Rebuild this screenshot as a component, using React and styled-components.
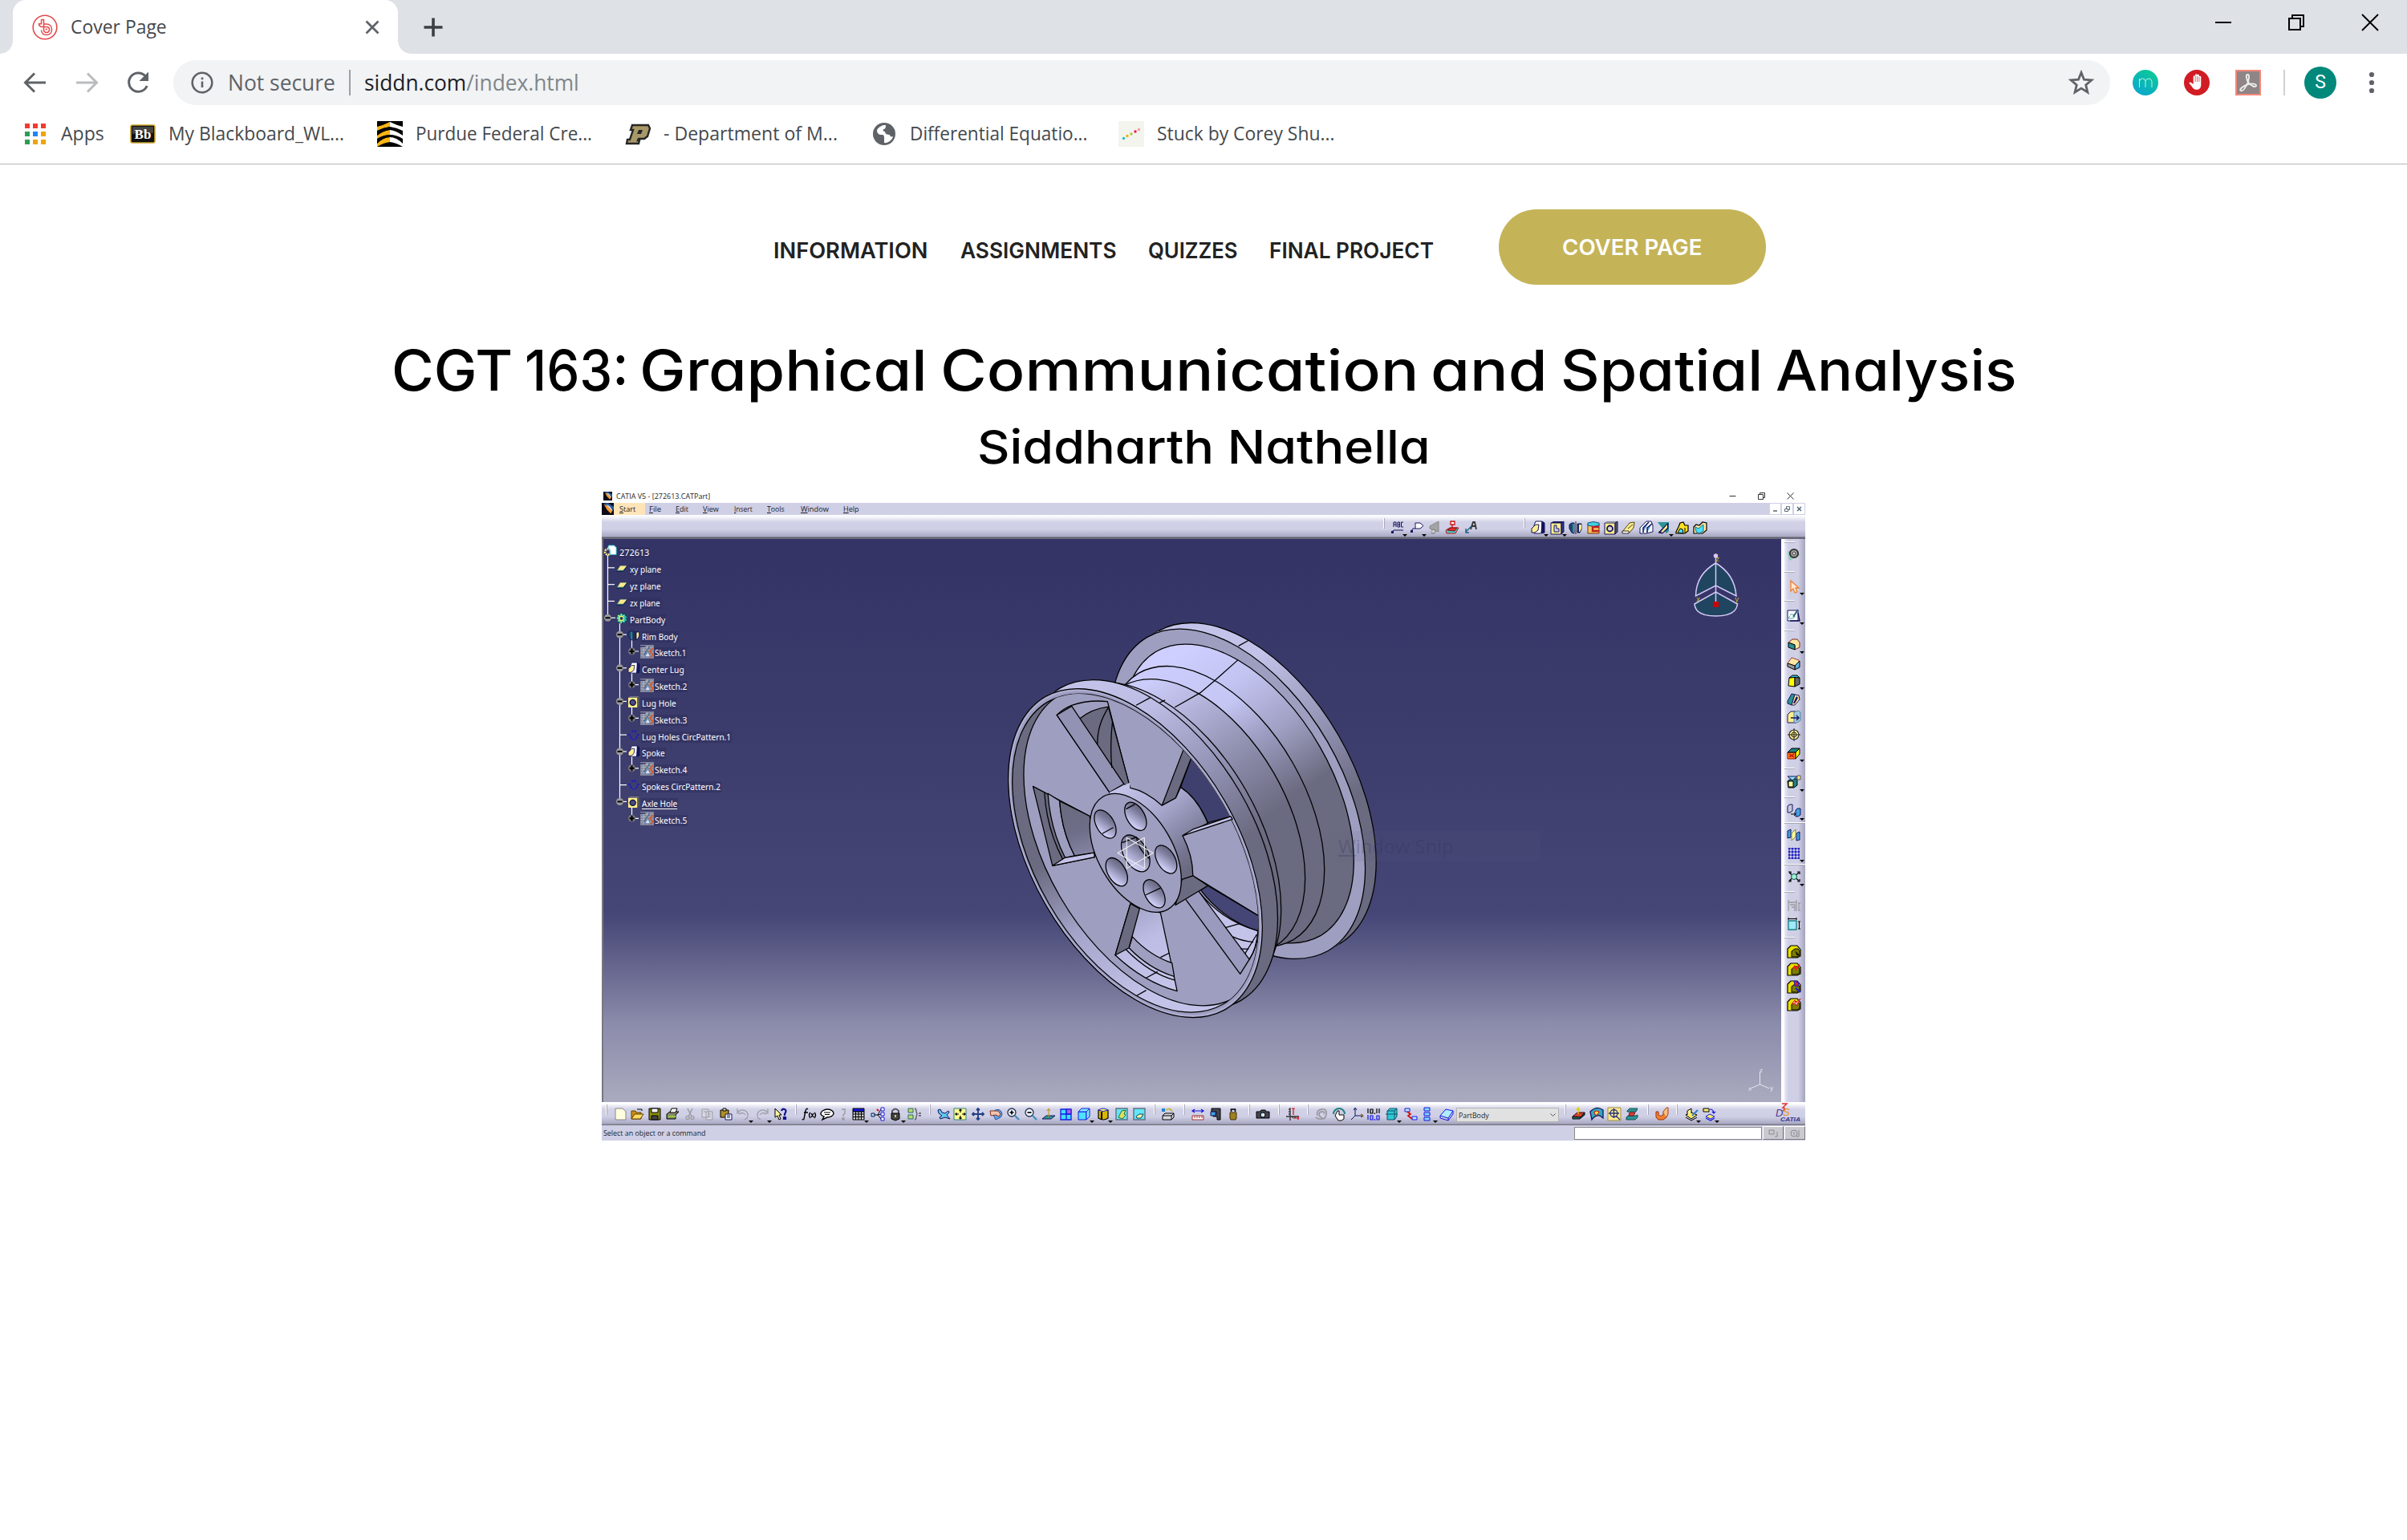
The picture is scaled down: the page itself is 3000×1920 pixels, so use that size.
import React, { useLayoutEffect, useRef, useState } from "react";
import styled, { createGlobalStyle } from "styled-components";

const GlobalStyle = createGlobalStyle`
  html, body { margin: 0; padding: 0; background: #fff; }
  * { box-sizing: border-box; }
  svg { display: block; flex: none; overflow: visible; }
`;

const UI = `"Open Sans", "Noto Sans", sans-serif`;
const HEAD = `Inter, "Open Sans", sans-serif`;

/* ---------- text that fills a known width ---------- */

const FitBox = styled.span`
  display: block;
  flex: none;
  width: ${(p) => p.$w}px;
  margin-left: ${(p) => p.$ml || 0}px;
  white-space: pre;
  text-align: left;
`;
const FitInner = styled.span`
  display: inline-block;
  transform-origin: 0 50%;
  text-decoration: ${(p) => (p.$u ? "underline" : "none")};
  text-underline-offset: 2px;
`;

function Fit({ w, ml, u, children }) {
  const ref = useRef(null);
  const [k, setK] = useState(1);
  useLayoutEffect(() => {
    const measure = () => {
      if (ref.current && ref.current.offsetWidth) {
        setK(w / ref.current.offsetWidth);
      }
    };
    measure();
    if (document.fonts) document.fonts.ready.then(measure);
  }, [w]);
  return (
    <FitBox $w={w} $ml={ml}>
      <FitInner ref={ref} $u={u} style={{ transform: `scaleX(${k})` }}>
        {children}
      </FitInner>
    </FitBox>
  );
}

/* ---------- browser chrome ---------- */

const Page = styled.div`
  width: 3000px;
  height: 1920px;
  display: flex;
  flex-direction: column;
  background: #fff;
  overflow: hidden;
  font-family: ${UI};
`;

const TabStrip = styled.div`
  height: 67px;
  flex: none;
  background: #dee1e6;
  display: flex;
  align-items: stretch;
  padding-left: 16px;
`;
const Tab = styled.div`
  position: relative;
  width: 480px;
  background: #fff;
  border-radius: 16px 16px 0 0;
  display: flex;
  align-items: center;
  padding: 0 24px;
  font-size: 23.5px;
  line-height: 32px;
  color: #45494d;
  &::before, &::after {
    content: "";
    position: absolute;
    bottom: 0;
    width: 16px;
    height: 16px;
  }
  &::before { left: -16px; background: radial-gradient(circle at 0 0, transparent 15.5px, #fff 16px); }
  &::after { right: -16px; background: radial-gradient(circle at 100% 0, transparent 15.5px, #fff 16px); }
`;
const TabTitle = styled.div`
  flex: 1;
  padding-left: 16px;
  margin-top: -2px;
`;
const NewTab = styled.div`
  display: flex;
  align-items: center;
  padding-left: 33px;
  flex: 1;
`;
const WindowButtons = styled.div`
  display: flex;
  gap: 72px;
  padding: 18px 36px 0 0;
`;

const Toolbar = styled.div`
  height: 72px;
  flex: none;
  display: flex;
  align-items: center;
  padding-left: 28px;
`;
const NavButtons = styled.div`
  width: 188px;
  display: flex;
  gap: 32px;
`;
const Omnibox = styled.div`
  width: 2414px;
  height: 56px;
  border-radius: 28px;
  background: #f1f3f4;
  display: flex;
  align-items: center;
  padding-left: 22px;
  padding-right: 20px;
  font-size: 27px;
  line-height: 40px;
  color: #5f6368;
`;
const SecureLabel = styled.div` padding-left: 18px; width: 169px; padding-bottom: 1px; `;
const Rule = styled.div`
  width: 2px;
  height: 32px;
  background: ${(p) => p.$c};
`;
const Url = styled.div`
  flex: 1;
  padding-left: 17px;
  padding-bottom: 1px;
  color: #80868b;
  b { font-weight: 400; color: #202124; }
`;
const Extensions = styled.div`
  display: flex;
  align-items: center;
  gap: 32px;
  padding-left: 28px;
`;
const AccountArea = styled.div`
  display: flex;
  align-items: center;
  margin-left: -4px;
`;
const Avatar = styled.div`
  width: 40px;
  height: 40px;
  margin: 0 28px 0 24px;
  border-radius: 50%;
  background: #00897b;
  color: #fff;
  font: 400 23px/40px Roboto, sans-serif;
  text-align: center;
`;

const Bookmarks = styled.div`
  height: 66px;
  flex: none;
  border-bottom: 1px solid #b3b5b8;
  display: flex;
  align-items: center;
  padding: 0 0 10px 28px;
  font-size: 23.5px;
  line-height: 34px;
  color: #45494d;
`;
const Bookmark = styled.div`
  display: flex;
  align-items: center;
  gap: 16px;
  width: ${(p) => p.$w}px;
`;
const BookmarkText = styled.div` margin-top: -1px; `;
const Glyph = styled.svg`
  width: ${(p) => p.$s || 32}px;
  height: ${(p) => p.$s || 32}px;
`;

const Favicon = () => (
  <Glyph viewBox="0 0 32 32" fill="none" stroke="#e4474a">
    <circle cx="16" cy="16" r="14.8" strokeWidth="1.6" />
    <path d="M11.500 6.500H14.500V18.500C14.500 21.500 16 22.500 18 22.500S21.500 21 21.500 19 20 15.500 18 15.500H13C10 15.500 8.500 14.200 8.500 11.800H11.500V6.500M14.500 12H18C22 12 24.500 15 24.500 19S21.800 25.500 18 25.500 11.800 23.500 11.500 19.500M16.500 18.500H19" strokeWidth="1.500" />
  </Glyph>
);
const BackIcon = ({ flip, color }) => (
  <Glyph viewBox="0 0 32 32" fill="none" stroke={color} strokeWidth="3">
    {flip ? <path d="M3 16H28M17 4.500L28.500 16 17 27.500" /> : <path d="M29 16H4M15 4.500L3.500 16 15 27.500" />}
  </Glyph>
);
const ReloadIcon = () => (
  <Glyph viewBox="0 0 32 32">
    <path d="M27.200 20A11.700 11.700 0 1 1 24.800 7.500" fill="none" stroke="#5f6368" strokeWidth="3" />
    <path d="M29 2.500V14H17.500Z" fill="#5f6368" />
  </Glyph>
);
const InfoIcon = () => (
  <Glyph $s={28} viewBox="0 0 28 28" fill="none" stroke="#5f6368" strokeWidth="2.600">
    <circle cx="14" cy="14" r="12.300" />
    <path d="M14 12.500V20M14 7.500V10.300" />
  </Glyph>
);
const StarIcon = () => (
  <Glyph viewBox="0 0 32 32">
    <path d="M16 3.500L19.500 12.200 28.800 12.900 21.700 18.900 23.900 28 16 23.100 8.100 28 10.300 18.900 3.200 12.900 12.500 12.200Z" fill="none" stroke="#5f6368" strokeWidth="2.800" />
  </Glyph>
);
const MIcon = () => (
  <Glyph viewBox="0 0 32 32">
    <defs>
      <linearGradient id="mg" x1=".8" y1="0" x2=".2" y2="1">
        <stop offset="0" stopColor="#0ccb95" />
        <stop offset="1" stopColor="#0aa6d0" />
      </linearGradient>
    </defs>
    <circle cx="16" cy="16" r="16" fill="url(#mg)" />
    <path d="M8.500 22V11M8.500 14q1-3 4-3t3.500 3V22M16 14q1-3 4.200-3t3.800 3.500V22" fill="none" stroke="#bff0ee" strokeWidth="1" />
  </Glyph>
);
const HandIcon = () => (
  <Glyph viewBox="0 0 32 32">
    <circle cx="16" cy="16" r="16" fill="#d01c22" />
    <path d="M11.700 18V8.500a1.200 1.200 0 0 1 2.400 0V14 6.500a1.200 1.200 0 0 1 2.400 0V14 7a1.200 1.200 0 0 1 2.400 0v7.500V9a1.200 1.200 0 0 1 2.400 0V18.500c0 4-2 6.300-5.500 6.300-3 0-4.500-1.500-6-4L6.600 17c-.4-1.500 1.500-2 2.500-1Z" fill="#fff" />
    <path d="M14.100 8V15M16.500 8V15M18.900 9V15" stroke="#d01c22" strokeWidth=".7" />
  </Glyph>
);
const PdfIcon = () => (
  <Glyph viewBox="0 0 32 32">
    <rect x="1" y="1" width="30" height="30" fill="#8f8585" stroke="#f5877a" strokeWidth="2" />
    <path d="M15.500 15C13 8 13.500 6 15.500 6s2 3 .5 9c-3 7-6.500 12-9 11s1-5 9-8c6-1.500 10.500 0 10 2s-6 1-10.500-5Z" fill="none" stroke="#ececec" strokeWidth="1.900" />
  </Glyph>
);
const Dots = () => (
  <Glyph viewBox="0 0 32 32" fill="#5f6368">
    {[6, 16, 26].map((y) => <circle key={y} cx="16" cy={y} r="3.100" />)}
  </Glyph>
);

const AppsIcon = () => (
  <Glyph viewBox="0 0 32 32">
    {["#f23b30", "#f23b30", "#f23b30", "#2c9f53", "#2184f4", "#f0a30a", "#2c9f53", "#f0a30a", "#f0a30a"].map((c, i) => (
      <rect key={i} x={3 + (i % 3) * 10} y={3 + Math.floor(i / 3) * 10} width="6" height="6" fill={c} />
    ))}
  </Glyph>
);
const BbIcon = () => (
  <Glyph viewBox="0 0 32 32">
    <rect x="1" y="5" width="30" height="22" rx="2" fill="#111" stroke="#c9a227" strokeWidth="1.600" />
    <path d="M3 7H29V15Q16 13 3 16Z" fill="#444" />
    <text x="16" y="22" fontFamily="Liberation Serif, serif" fontWeight="700" fontSize="17" fill="#fff" textAnchor="middle">Bb</text>
  </Glyph>
);
const PurdueFedIcon = () => (
  <Glyph viewBox="0 0 32 32">
    <rect width="32" height="32" fill="#000" />
    <path d="M0 7Q8 5 16 1V7Q8 8 0 12ZM0 18Q8 12 16 11V17Q8 17 0 22ZM0 28Q8 20 16 20V26Q8 27 0 32Z" fill="#fdb515" />
    <path d="M32 7Q24 5 16 1V7Q24 8 32 12ZM32 18Q24 12 16 11V17Q24 17 32 22ZM32 28Q24 20 16 20V26Q24 27 32 32Z" fill="#fff" />
    <path d="M0 12Q8 8 16 7V11Q8 11 0 18Z M0 25Q8 18 16 18V20Q8 20 0 28Z" fill="#000" />
  </Glyph>
);
const PurduePIcon = () => (
  <Glyph viewBox="0 0 32 32">
    <path d="M9 5H29L31 9 28 19 24 22H17L16 24H18L17 28H2L3 23H6L10 11H7Z" fill="#a89968" stroke="#262626" strokeWidth="2.400" />
    <path d="M17 11H22L20 16H15Z" fill="#262626" />
  </Glyph>
);
const GlobeIcon = () => (
  <Glyph viewBox="0 0 32 32">
    <circle cx="16" cy="16" r="14" fill="#5f6368" />
    <path d="M18 5c-3-.5-8 1-11 6 0 4 2 6 6 6 3 0 3 2 3 4v6c4 1 10-3 11-8-2 1-4 0-4-2-3 0-6-1-6-4-2 0-3-1-2-3 2 0 3-1 3-5Z" fill="#fff" />
  </Glyph>
);
const StuckIcon = () => (
  <Glyph viewBox="0 0 32 32">
    <rect width="32" height="32" fill="#f4f4ee" />
    {[["#19c5c5", 6.500, 21.500], ["#f5b000", 11, 18.500], ["#a4c936", 16, 16], ["#f5145f", 21, 13], ["#ff9a94", 25.500, 10.500]].map(([c, x, y]) => (
      <circle key={c} cx={x} cy={y} r="1.700" fill={c} />
    ))}
  </Glyph>
);

const BOOKMARKS = [
  { icon: <AppsIcon />, text: "Apps", tw: 54, w: 134 },
  { icon: <BbIcon />, text: "My Blackboard_WL...", tw: 219, w: 308 },
  { icon: <PurdueFedIcon />, text: "Purdue Federal Cre...", tw: 220, w: 309 },
  { icon: <PurduePIcon />, text: "- Department of M...", tw: 217, w: 307 },
  { icon: <GlobeIcon />, text: "Differential Equatio...", tw: 221, w: 308 },
  { icon: <StuckIcon />, text: "Stuck by Corey Shu...", tw: 221, w: 300 },
];

function Chrome() {
  return (
    <>
      <TabStrip>
        <Tab>
          <Favicon />
          <TabTitle><Fit w={120}>Cover Page</Fit></TabTitle>
          <Glyph $s={16} viewBox="0 0 16 16" stroke="#5f6368" strokeWidth="2.800"><path d="M.5 .5L15.500 15.500M15.500 .5L.5 15.500" /></Glyph>
        </Tab>
        <NewTab>
          <Glyph $s={22} viewBox="0 0 22 22" stroke="#3c4043" strokeWidth="3.600"><path d="M11 -.5V22.500M-.5 11H22.500" /></Glyph>
        </NewTab>
        <WindowButtons>
          <Glyph $s={20} viewBox="0 0 20 20"><path d="M1 10H21" stroke="#000" strokeWidth="2" /></Glyph>
          <Glyph $s={20} viewBox="0 0 20 20" fill="none" stroke="#000" strokeWidth="2"><path d="M1 5H15V19H1ZM5 5V1H19V15H15" /></Glyph>
          <Glyph $s={20} viewBox="0 0 20 20" stroke="#000" strokeWidth="1.800"><path d="M0 0L20 20M20 0L0 20" /></Glyph>
        </WindowButtons>
      </TabStrip>
      <Toolbar>
        <NavButtons>
          <BackIcon color="#5f6368" />
          <BackIcon flip color="#babcbe" />
          <ReloadIcon />
        </NavButtons>
        <Omnibox>
          <InfoIcon />
          <SecureLabel><Fit w={134}>Not secure</Fit></SecureLabel>
          <Rule $c="#9aa0a6" />
          <Url><Fit w={268}><b>siddn.com</b>/index.html</Fit></Url>
          <StarIcon />
        </Omnibox>
        <Extensions>
          <MIcon />
          <HandIcon />
          <PdfIcon />
          <AccountArea>
            <Rule $c="#cfd1d4" />
            <Avatar>S</Avatar>
            <Dots />
          </AccountArea>
        </Extensions>
      </Toolbar>
      <Bookmarks>
        {BOOKMARKS.map((b) => (
          <Bookmark key={b.text} $w={b.w}>
            {b.icon}
            <BookmarkText><Fit w={b.tw}>{b.text}</Fit></BookmarkText>
          </Bookmark>
        ))}
      </Bookmarks>
    </>
  );
}

/* ---------- site header ---------- */

const Site = styled.main`
  display: flex;
  flex-direction: column;
  align-items: center;
  font-family: ${HEAD};
  font-feature-settings: "cv11" 1;
`;
const SiteNav = styled.nav`
  display: flex;
  align-items: center;
  height: 94px;
  margin-top: 56px;
  width: 2352px;
  padding-left: 640px;
  font-size: 27.500px;
  line-height: 40px;
  font-weight: 600;
  color: #222;
`;
const NavLink = styled.a`
  padding-top: 7px;
  width: ${(p) => p.$w}px;
`;
const CoverButton = styled.a`
  width: 333px;
  height: 94px;
  border-radius: 47px;
  background: #c5b358;
  color: #fff;
  display: flex;
  align-items: center;
  justify-content: center;
  padding-bottom: 1px;
`;
const Title = styled.h1`
  margin: 52px 0 0;
  display: flex;
  font-size: 70px;
  line-height: 110px;
  font-weight: 500;
  color: #000;
`;
const Subtitle = styled.h2`
  margin: 0;
  font-size: 58px;
  line-height: 80px;
  font-weight: 500;
  color: #000;
`;

/* ---------- CATIA window ---------- */

const Catia = styled.section`
  width: 1500px;
  height: 812px;
  margin-top: 13px;
  display: flex;
  flex-direction: column;
  background: #cfcfe6;
  font-family: ${UI};
  font-feature-settings: normal;
  color: #1d1d1d;
`;
const CTitle = styled.div`
  height: 17px;
  flex: none;
  background: #fff;
  display: flex;
  align-items: center;
  padding: 0 14px 0 2px;
  font-size: 9.500px;
  line-height: 14px;
`;
const CTitleText = styled.div` flex: 1; padding-left: 5px; `;
const CWinBtns = styled.div` display: flex; gap: 27px; `;
const CMenu = styled.div`
  height: 15px;
  flex: none;
  display: flex;
  align-items: center;
  font-size: 9.500px;
  line-height: 14px;
  u { text-underline-offset: 1px; text-decoration-thickness: 1px; }
`;
const MenuItem = styled.div`
  height: 15px;
  width: ${(p) => p.$w}px;
  padding-left: ${(p) => p.$pl || 0}px;
  padding-top: 1px;
  background: ${(p) => (p.$on ? "#ffe4b8" : "transparent")};
`;
const MdiBtns = styled.div`
  flex: 1;
  display: flex;
  justify-content: flex-end;
  gap: 2px;
  padding-right: 1px;
`;
const MdiBtn = styled.div`
  width: 13px;
  height: 13px;
  background: #fff;
  display: flex;
  align-items: center;
  justify-content: center;
`;
const TopBar = styled.div`
  height: 30px;
  flex: none;
  display: flex;
  padding: 8px 0 0 974px;
  background: linear-gradient(#fff 0, #f4f4fb 3px, #d0d0e6 9px, #cfcfe6 18px, #a9a9c3 27px, #5d5d6d 28px, #70707c 30px);
`;
const Slot = styled.div`
  width: ${(p) => p.$w}px;
  height: 20px;
  flex: none;
  position: relative;
`;
const SepV = styled.div`
  width: 2px;
  height: 13px;
  margin-top: -4px;
  background: linear-gradient(90deg, #fff 50%, #a8a8b8 50%);
`;
const Caret = styled.i`
  position: absolute;
  left: ${(p) => p.$x}px;
  top: ${(p) => p.$y}px;
  border: 3px solid transparent;
  border-top-color: #000;
  border-bottom: 0;
`;
const Middle = styled.div`
  height: 702px;
  flex: none;
  display: flex;
`;
const Viewport = styled.div`
  position: relative;
  width: 1470px;
  border-left: 2px solid #77777f;
  background: linear-gradient(#333366 0%, #3c3c6c 33%, #454576 66%, #5b5b86 73%, #8b8bab 86%, #aaaabf 100%);
  overflow: hidden;
`;
const SideBar = styled.div`
  width: 30px;
  display: flex;
  flex-direction: column;
  background: linear-gradient(90deg, #fff 0 3px, #e4e4f2 5px, #cfcfe6 9px, #cfcfe6 21px, #a4a4bd 30px);
`;
const SideSlot = styled.div`
  height: ${(p) => p.$h}px;
  flex: none;
  position: relative;
  padding-left: 8px;
`;
const SepH = styled.div`
  width: ${(p) => (p.$wide ? 26 : 13)}px;
  margin-left: -4px;
  height: 2px;
  background: linear-gradient(#fff 50%, #a8a8b8 50%);
`;
const BottomBar = styled.div`
  height: 29px;
  flex: none;
  display: flex;
  padding: 7px 0 0 5px;
  background: linear-gradient(#fff 0, #fff 2px, #e2e2f0 6px, #d0d0e6 10px, #cfcfe6 18px, #a9a9c3 27px, #70707c 28px, #8a8a96 29px);
`;
const Combo = styled.div`
  width: 128px;
  height: 18px;
  border: 1px solid #b4b4b4;
  background: #e1e1e1;
  display: flex;
  align-items: center;
  justify-content: space-between;
  padding: 0 3px 0 2px;
  font-size: 9.500px;
  line-height: 15px;
`;
const StatusBar = styled.div`
  flex: 1;
  display: flex;
  align-items: center;
  padding-left: 2px;
  font-size: 9.500px;
  line-height: 14px;
`;
const StatusText = styled.div` width: 1210px; `;
const StatusInput = styled.div`
  width: 234px;
  height: 16px;
  background: #fff;
  border: 1px solid #8a8a8a;
`;
const StatusBtn = styled.div`
  width: 26px;
  height: 17px;
  margin-left: 1px;
  background: #c9c9cf;
  border: 1px solid;
  border-color: #fff #77777f #77777f #fff;
  display: flex;
  align-items: center;
  justify-content: center;
`;

const N = "#15155c", Y = "#ffee8c", T = "#2b9393", K = "#000", C = "#4fe0ff", R = "#d01010", B = "#1818e0", G = "#9c9ca4", D = "#55555f";

/* each icon is a list of [path, fill, stroke, stroke width] on a 16 x 16 grid */
const ICONS = {
  abc: [["M3 11H15M3 11L1 13M3 7V1H6V7M3 4H6M8 7V1H10.500V7H8M8 4H10.500M15 1H12.500V7H15", "none", N], ["M0 12H3V15H0Z", N]],
  flag: [["M6 2H12L16 5.500 12 9H6Z", "#fff", N], ["M6 9H3L1 12", "none", N], ["M0 11H3V14H0Z", N]],
  speaker: [["M2 6L13 0V13L8 11 7 15 4 15 5 10 2 9Z", "#a4a4a4", "#888"], ["M4 11Q8 9 9 12T5 15", "#ccc", "#777"]],
  stamp: [["M0 11L5 8H16L12 15H1Z", "#40c8c8", R], ["M2 11L6 8H14L11 12Z", "#e03030", "#801010"], ["M6 0H11V4H6ZM8 4V9", "#fff", R, 1.300]],
  aarrow: [["M8 10L11 1H13L15 10M9 6H14", "none", "#333", 1.800], ["M9 6L2 13M2 9V14H6", "none", "#206080", 1.400]],
  pad: [["M5 0H13V13L11 15H3V5Z", "#fff", N], ["M13 0L16 2V14L12 15Z", N, N], ["M0 9L5 4H9L8 11 4 14H0Z", Y, N]],
  pocket: [["M0 2H13V16H0Z", Y, N], ["M0 2L3 0H16L13 2Z", N], ["M13 2L16 0V13L13 16Z", "#333388", N], ["M4 5H7V9H10V13H4Z", "#cfcfe6", N]],
  shaft: [["M0 4L3 2H6V15L3 14 0 9Z", "#1c4a70", N], ["M4 3H6V14H4Z", T], ["M10 3H15V10L13 14H10Z", "#1c2a60", N], ["M12 4H15V9L13 13H12Z", Y], ["M8 0V16", "none", "#222"]],
  groove: [["M1 3H15V15H1Z", "#f0c860", "#803000"], ["M1 2Q8 -1 15 2V5Q8 8 1 5Z", "#40d0e0", "#205080"], ["M15 7H7V12H15", "none", "#c02020", 2.400]],
  hole: [["M0 2H13V16H0Z", Y, N], ["M0 2L3 0H16L13 2Z", "#88889a"], ["M13 2L16 0V13L13 16Z", "#55556a", N], ["M3 9A3.500 3.500 0 1 0 10 9 3.500 3.500 0 1 0 3 9Z", "#d8d8c8", N, 1.800]],
  treehole: [["M0 2H13V16H0Z", "#fff08c"], ["M0 2L3 0H16L13 2Z", "#77777f"], ["M13 2L16 0V13L13 16Z", "#55555f"], ["M2.500 9A4 4 0 1 0 10.500 9 4 4 0 1 0 2.500 9Z", "#4a4a80", "#101040", 1.600]],
  rib: [["M0 13L9 2 15 1 14 8 9 14H0Z", Y, "#554400"], ["M0 12H8V15H0ZM7 9L13 4", "#fff", "#333"]],
  slot: [["M0 8L8 0H14L16 5V13L8 15H0Z", "#fff", N], ["M4 14V8L11 1M9 14V8L15 3", "#58a0d8", N, 1.500]],
  stiff: [["M0 1H14V12L11 15Z", T], ["M1 14L13 2V9L6 15Z", "#1c1c60", N], ["M4 13L12 4V8L6 14Z", Y]],
  multi: [["M0 13L3 7 5 2 9 1 11 5 15 5V12L11 15H0Z", "#ffe020", K, 1.200], ["M2 14L5 9 8 10 9 15ZM11 8V14", C, K]],
  multi2: [["M0 7L3 4 7 5 11 1 16 2V11L11 15H0Z", "#ffe9a0", K, 1.200], ["M2 7L6 9 12 4V12L7 15 3 13Z", C, "#107080"]],
  newdoc: [["M2 1H11L15 5V15H2Z", "#fffde0", "#888"]],
  open: [["M1 14V4H6L7 6H13V14Z", "#c89018", "#604000"], ["M1 14L5 8H16L12 14Z", "#ffd860", "#604000"], ["M8 2H14V4", "none", K]],
  save: [["M1 1H15V15H1Z", "#8a8a10", K], ["M4 1H12V6H4Z", "#fff", K], ["M4 10H12V15H4Z", "#444", K]],
  print: [["M1 8L5 5H16L12 9V14H1Z", "#888870", K], ["M5 6L7 1H14L12 6Z", "#fff", K], ["M3 11H12", "none", "#90d030", 2]],
  cut: [["M5 1L10 11M11 1L6 11", "none", G, 1.500], ["M3 12.500A2 2 0 1 0 7 12.500 2 2 0 1 0 3 12.500ZM9 12.500A2 2 0 1 0 13 12.500 2 2 0 1 0 9 12.500Z", "none", G, 1.300]],
  copy: [["M1 2H9V12H1ZM6 5H14V15H6ZM8 8H12M8 11H12M3 5H6", "#d8d8e6", G]],
  paste: [["M2 3H12V12H2Z", "#b09020", K], ["M5 1H9V4H5Z", "#ddd", K], ["M8 8H16V15H8ZM10 10H14M10 12H14", "#fff", N]],
  undo: [["M1 6Q6 1 11 4T13 13L10 15M1 1V7H7M3 8Q8 5 11 9", "none", G, 1.200]],
  redo: [["M15 6Q10 1 5 4T3 13L6 15M15 1V7H9M13 8Q8 5 5 9", "none", G, 1.200]],
  help: [["M1 1V12L4 10 6 15 8 14 6 9H9Z", "#fff3a0", K], ["M9 4Q10 1 13 2T13 8V10M12 12H14V14H12Z", "none", "#101090", 2.200]],
  fx: [["M6 2Q4 0 3 4L1 14Q0 16 -1 14M1 6H6M9 6Q6 9 9 13M10 7L13 12M13 7L10 12M14 6Q17 9 14 13", "none", K, 1.400]],
  bubble: [["M8 2C12 2 16 4 16 7S12 12 8 12L2 15 4 11C1 10 0 9 0 7S4 2 8 2Z", "#fff", K, 1.400], ["M4 6H12M5 8.500H11", "none", K]],
  grayq: [["M6 2H10V7L8 9V11M7 13H9V15H7Z", "none", G, 1.500]],
  table: [["M1 1H15V5H1Z", B, K], ["M1 5H15V15H1ZM1 8H15M1 11.500H15M4.500 5V15M8 5V15M11.500 5V15", "#ccc", K]],
  ktree: [["M0 7H4V11H0Z", "#a0e0f0", N], ["M4 9H8L12 2M8 9L12 8M8 9L12 14", "none", K], ["M12 0H16V4H12ZM12 6H16V10H12ZM12 12H16V16H12Z", "#fff", B], ["M7 2L9 4", "none", R, 2]],
  lock: [["M4 7V4Q8 -1 12 4V7", "none", D, 2], ["M3 7H13V14L8 16 3 14Z", "#44443c", K], ["M7 9H9V12H7Z", "#bbb"]],
  rules: [["M1 1H7V6H1ZM1 9H7V14H1Z", "#c0d860", "#207070"], ["M9 1Q11 1 11 5L12 8 11 11Q11 15 9 15M14 7H17M14 10H17", "none", D, 1.300]],
  fly: [["M1 3L4 2 6 6 10 7 14 4 15 6 12 9 16 14 10 12 4 14 3 12 6 10 2 7Z", "#60c8f0", N]],
  fit: [["M0 1H15V15H0Z", "#ffff90", "#308080"], ["M8 2V6M8 10V14M2 8H6M10 8H14M6.500 3.500L8 2 9.500 3.500M6.500 12.500L8 14 9.500 12.500M3.500 6.500L2 8 3.500 9.500M12.500 6.500L14 8 12.500 9.500", "none", K, 1.200]],
  pan: [["M8 1V15M1 8H15M6 3L8 1 10 3M6 13L8 15 10 13M3 6L1 8 3 10M13 6L15 8 13 10", "none", "#204080", 1.800]],
  rotate: [["M5 9A5.500 5.500 0 1 1 14 12L8 15Z", "#60a8e8", "#2050a0"], ["M1 4H11L14 8 12 11 8 9 2 10Z", "#f4c4b0", "#803020"]],
  zin: [["M1 6A5 5 0 1 0 11 6 5 5 0 1 0 1 6Z", "#f4f8ff", "#203050", 1.300], ["M10 10L15 15", "none", "#4090c0", 2.400], ["M3.500 6H8.500M6 3.500V8.500", "none", K, 1.700]],
  zout: [["M1 6A5 5 0 1 0 11 6 5 5 0 1 0 1 6Z", "#f4f8ff", "#203050", 1.300], ["M10 10L15 15", "none", "#4090c0", 2.400], ["M3.500 6H8.500", "none", K, 1.700]],
  normal: [["M0 14L5 10H16L11 14Z", "#309898", N], ["M8 12V2M6 4L8 1 10 4", "none", "#c09000"]],
  multiv: [["M1 2H14V15H1Z", "#40e0ff", B, 1.300], ["M8 2H14V8H8Z", "#b060e0", B], ["M8 2V15M1 8H14", "none", B, 1.300]],
  cube: [["M1 5H11V15H1Z", C, B], ["M1 5L5 1H15L11 5ZM15 1V11L11 15V5Z", "#80ecff", B]],
  cyl: [["M2 3V13Q8 17 14 13V3Z", "#d8b800", K, 1.200], ["M2 3Q8 -1 14 3 8 6 2 3Z", "#ffff60", B], ["M6 5V15", "none", K, 2]],
  hide: [["M1 1H15V15H1Z", "#60e8f8", "#607080", 1.400], ["M4 12L8 4 13 3 11 8 13 9 9 14Z", "#e0e060", "#207040"]],
  swap: [["M1 1H15V15H1Z", "#60e8f8", "#607080", 1.400], ["M4 11L8 8H13L10 13H5Z", "#fff6a0", "#104060"]],
  sect: [["M1 10L4 7H15V12L12 15H1Z", "#d8d8e0", K], ["M1 10H12V15M12 10L15 7", "none", K], ["M5 3Q10 -1 13 5", "none", "#c0b000", 1.400], ["M0 1H4V5H0Z", "#2080d0"]],
  meas: [["M2 4H14M4 2L1 4 4 6M12 2L15 4 12 6", "none", B, 1.200], ["M1 10H15V15H1ZM4 10V13M7 10V13M10 10V13M13 10V13", "#fff", "#a03030"]],
  caliper: [["M3 1H14V15H10V11H5V8H9V5H3Z", "#444450", K], ["M2 5H8V10H2Z", "#40a0e0", N]],
  weight: [["M5.500 5V2H10.500V5", "none", K, 1.600], ["M4 6H12V13L11 15H5L4 13Z", "#a08020", "#403000"]],
  camera: [["M0 5H4L6 3H11L12 5H16V13H0Z", "#444450", K], ["M5 9A3 3 0 1 0 11 9 3 3 0 1 0 5 9Z", "#d0e8ff", K]],
  ruler: [["M5 0V16M0 11H16M3 2H5M3 5H5M3 8H5M8 13V11M11 13V11", "none", "#333", 1.300], ["M9 9V1M7 1H11M9 13H16M15 11V15", "none", R, 1.200]],
  swirl: [["M3 10Q1 3 8 2T14 8 9 13 5 8 9 5 11 8M1 12Q6 16 13 13", "none", G, 1.800]],
  handg: [["M1 8A7 7 0 1 1 15 8", "none", "#208080", 2], ["M6 4H8V9H14V14L11 16H7L3 10Z", "#fff", K]],
  axis: [["M6 10V1M6 10H15M6 10L1 15M4 3L6 0 8 3M13 8L16 10 13 12", "none", N], ["M13 9H16V12", "none", "#c09000"]],
  tens: [["M1 1V7M4 2H7V7H4ZM9.500 6.500V8M12 1V7M15 1V7", "none", K, 1.200], ["M1 9V15M4 10H7V15H4ZM9.500 14V16M12 10H15V15H12Z", "none", B, 1.200]],
  cycube: [["M2 4L5 1H14V11L11 15H2Z", "#30c8d8", "#105060"], ["M2 4H11V15M11 4L14 1M0 8H15", "none", "#105060"]],
  link: [["M1 1H7V5H1ZM10 11H16V15H10Z", "#c0e8ff", B], ["M4 5L8 8 5 10 10 14", "none", R, 1.800]],
  stack: [["M4 0H11V4H4ZM4 6H11V10H4ZM4 12H11V16H4Z", "#80d8ff", B]],
  body: [["M0 10L7 2 16 4 10 13Z", "#b0ecff", B], ["M0 10V13L10 16V13M10 16L16 8V4", "none", B]],
  an1: [["M0 11L6 6H15L10 13H1Z", "#d04030", "#400"], ["M0 11V14H9L15 9V6L10 12Z", "#207878", K], ["M7 8V1M5 3L7 0 9 3", "none", "#e0d000", 1.400]],
  an2: [["M0 5Q8 -3 16 3V13L12 10Q6 9 2 15Z", "#30a8c0", N, 1.300], ["M5 5Q8 3 11 5L9 9H6Z", "#f0e040", R]],
  an3: [["M0 0H16V16H0Z", "#ffe890", "#a09040"], ["M3 7A4.500 4.500 0 1 0 12 7 4.500 4.500 0 1 0 3 7ZM7.500 1V13M1 7H14M10 10L15 15", "none", "#203080", 1.300]],
  an4: [["M2 4L5 1H15L13 5H2ZM1 12L3 10H13L15 9V12L12 15H1Z", T, "#105050"], ["M5 6H12L10 10H4Z", "#e04040", "#701010"]],
  cup: [["M1 5H4V9Q7 12 10 9V5H14V12L10 15H4L1 12Z", "#f08030", "#a03000"], ["M10 5L14 0H16V8L14 12", "#f8c080", "#a04010"]],
  cat1: [["M1 9L8 6 15 9 8 14Z", "#ffee60", K], ["M3 9V4L8 1V7", "#fff4a0", K], ["M9 10L16 3", "none", "#3080d0", 2.200], ["M1 12L8 16 15 12", "none", K]],
  cat2: [["M0 1H7V5H0Z", "#ffee80", K], ["M3 11L8 8 14 11 9 14Z", "#ffee60", B], ["M3 13L9 16 14 13M8 2Q13 2 13 7M11 5L13 7 15 5", "none", B, 1.200]],
  gear: [["M0 4L16 9 2 16Z", "#90c8b8"], ["M3 7A5 5 0 1 0 13 7 5 5 0 1 0 3 7Z", "#aaa", "#333", 2.200], ["M6 7A2 2 0 1 0 10 7 2 2 0 1 0 6 7Z", "#ddd", "#333"]],
  cursor: [["M4 0V13L7 10 9 15 12 14 10 9H14Z", "#ffe8d0", "#f08030", 1.300]],
  sketch: [["M0 2H13V15H0Z", "#fff", N], ["M13 5L15 15H3", "none", N, 1.400], ["M3 8Q5 5 8 8T5 12 3 9", "none", "#40a0a0"], ["M7 10L13 1", "none", "#306080", 2]],
  fillet: [["M1 6L6 2H12L15 6V12L9 15 9 9Z", "#ffe8a0", "#802020"], ["M1 6L9 9V15L1 12Z", T, K]],
  chamfer: [["M0 8L5 1 14 4V6L9 11Z", "#ffe8a0", "#a04040"], ["M9 11L15 5V13L9 16Z", "#60b0e0", K], ["M0 8L9 11V16L0 12Z", "#999", K]],
  draft: [["M2 4L9 3 9 15 1 14Z", "#ffff00", K], ["M9 3L15 4V12L9 15Z", "#666", K], ["M2 4L6 1H12L15 4 9 3.500Z", "#30c0e0", K]],
  shell: [["M0 10L5 1 9 2 5 15 0 13Z", T, N], ["M5 15L9 2 14 3 15 8 9 15Z", "#ffe8a0", N], ["M7 13L11 4 13 6 9 13Z", "#101060"]],
  thick: [["M0 5L4 1H10V15H0Z", Y, N], ["M8 2L13 0 16 2V12L12 15H8Z", "#a0c8e0", "#5080a0"], ["M4 9H14M11 6L14 9 11 12", "none", N, 1.400]],
  target: [["M2 8A6 6 0 1 0 14 8 6 6 0 1 0 2 8Z", Y, "#333", 1.200], ["M5 8A3 3 0 1 0 11 8 3 3 0 1 0 5 8ZM8 0V16M0 8H16", "none", "#222", 1]],
  remove: [["M0 7H10V15H0Z", "#ff9020", "#a00000"], ["M0 7L5 2H15L10 7Z", "#208080", K], ["M15 2V9L10 15V7Z", "#ffff00", K], ["M2 9L8 13M8 9L2 13", "none", R, 1.600]],
  thread: [["M0 7L4 4H12V12L8 15H1Z", "#208080", K], ["M1 7H7V14H1Z", "#ffffa0", K], ["M0 1H12L6 6Z", "#90e0f0", N], ["M12 0H16V5H12Z", "#ffee80", D]],
  transl: [["M0 2L3 0H6V8L3 10H0Z", "#c8c8dc", N], ["M10 7L12 5H16V13L13 15H10Z", "#40a0e0", N], ["M4 12H9M8 10L10 12 8 14", "none", K]],
  mirror: [["M0 3L4 1V11L0 12ZM11 6L15 4V14L11 15Z", "#40a0e0", N], ["M5 6L10 1V10L5 15Z", "#ffffa0", "#808040"]],
  grid: [["M2 2H14V14H2ZM2 6H14M2 10H14M6 2V14M10 2V14", "none", "#2020c0", 1], ["M1 1H3V3H1ZM5 1H7V3H5ZM9 1H11V3H9ZM13 1H15V3H13ZM1 5H3V7H1ZM5 5H7V7H5ZM9 5H11V7H9ZM13 5H15V7H13ZM1 9H3V11H1ZM5 9H7V11H5ZM9 9H11V11H9ZM13 9H15V11H13ZM1 13H3V15H1ZM5 13H7V15H5ZM9 13H11V15H9ZM13 13H15V15H13Z", "#2020c0"]],
  scale: [["M2 3L14 13M14 3L2 13M1 2H4V5M12 2H15V5M1 14H4V11M12 14H15V11", "none", K, 1.200], ["M4.500 8A3.500 3.500 0 1 0 11.500 8 3.500 3.500 0 1 0 4.500 8Z", "#a0f0d0", "#105050"]],
  gdim: [["M1 0V14M1 3H11M3 6H9V14M5 9H9M11 0V14M14 4V13M13 4H16M13 13H16", "none", G, 1.300]],
  dim: [["M1 4H11V15H1Z", "#a0e8ff", "#208080", 1.400], ["M1 0V3M11 0V3M1 1.500H11M13 5H16M13 14H16M14.500 5V14", "none", K]],
  y1: [["M0 5L4 1H12L16 6V14L12 16H0Z", "#e8e000", K, 1.200], ["M5 8L9 5H13L15 8V13L12 15H5Z", "#7c7c00", K], ["M9 7L15 13 12 13 13 16Z", K]],
  y2: [["M0 5L4 1H12L16 6V14L12 16H0Z", "#e8e000", K, 1.200], ["M5 8L9 5H13L15 8V13L12 15H5Z", "#7c7c00", K], ["M5 8L9 3 10 6 16 1 11 10 9 7Z", "#f02020"]],
  y3: [["M0 5L4 1H12L16 6V14L12 16H0Z", "#e8e000", K, 1.200], ["M5 8L9 5H13L15 8V13L12 15H5Z", "#7c7c00", K], ["M8 1L14 3 13 8 9 7Z", "#d02020", B], ["M10 10L16 15", "none", B, 2]],
  y4: [["M0 5L4 1H12L16 6V14L12 16H0Z", "#e8e000", K, 1.200], ["M5 8L9 5H13L15 8V13L12 15H5Z", "#7c7c00", K], ["M5 8L9 3 10 6 16 1 11 10 9 7Z", "#ffb0a0", R]],
  plane: [["M0 13L5 5H16L10 13Z", "#308080"], ["M2 11L6 5H15L10 11Z", "#ffe98a"], ["M0 13H10L16 5", "none", "#101040"]],
  partbody: [["M3 1L6 3 8 0 10 3 13 1 13 4 16 6 14 8 16 11 13 12 12 15 9 13 6 16 5 13 1 13 2 9 0 7 2 5Z", "#28c0b0", "#0a3050", .8], ["M2 4L5 5M7 1L7 4M11 3L10 5M1 8H4M3 12L5 11M7 15V12M11 13L10 11", "none", "#f0f060", 1.300], ["M4.500 8A3 3 0 1 0 10.500 8 3 3 0 1 0 4.500 8Z", "#203c70", "#ffff60", 1.200]],
  root: [["M4 0H12L15 3V13H6V6L3 4Z", "#fff", "#30c0d0"]],
  circ: [["M5 1H7V3H5ZM9 1H11V3H9ZM1 6H3V8H1ZM13 6H15V8H13ZM3 10H5V12H3ZM11 10H13V12H11ZM6 13H7V14H6ZM9 13H10V14H9Z", "none", "#1a1ac8", 1]],
  sketchT: [["M0 0H16V16H0Z", "#84869a"], ["M1 3H15M1 6H15M1 9H15M1 12H15M4 1V15M8 1V15", "none", "#b8c4c8", .7], ["M0 2H6", "none", "#202060", 1.200], ["M5 14L9 8 12 14Z", "#e0e0f0", "#6080b0"], ["M4 12L11 2", "none", "#4a6a90", 1.300], ["M15 4L11 8 15 11 12 15", "none", "#d06030", 1.800]],
};

const Ico = ({ name, s = 16 }) => (
  <Glyph $s={s} viewBox="0 0 16 16">
    {ICONS[name].map(([d, f, st, w], i) => (
      <path key={i} d={d} fill={f} stroke={st || "none"} strokeWidth={w || 1} />
    ))}
  </Glyph>
);

/* centre x of every tool, an arrow mark at its own x */
const TOP_TOOLS = [
  [1725, "|"], [1742, "abc", 1751], [1765.500, "flag", 1774.500], [1788, "speaker"], [1810, "stamp"], [1833, "aarrow"],
  [1900, "|"], [1917, "pad", 1927], [1940.500, "pocket", 1950], [1964, "shaft"], [1986, "groove"], [2008, "hole"],
  [2030, "rib"], [2052, "slot"], [2074, "stiff", 2083], [2097, "multi"], [2119, "multi2"],
];
const BOTTOM_TOOLS = [
  [756, "|"], [773, "newdoc"], [794, "open"], [816, "save"], [838, "print"], [860, "cut"], [882, "copy"], [903.500, "paste"],
  [926, "undo", 936], [949.500, "redo", 959], [973, "help"], [992, "|"], [1009, "fx"], [1031, "bubble"], [1051, "grayq"],
  [1070, "table", 1080], [1094, "ktree"], [1116, "lock", 1125.500], [1139, "rules"], [1159, "|"], [1176, "fly"], [1197, "fit"],
  [1219, "pan"], [1241, "rotate"], [1263, "zin"], [1285, "zout"], [1307, "normal"], [1329, "multiv"], [1351, "cube", 1360.500],
  [1374.500, "cyl", 1384], [1398, "hide"], [1419.500, "swap"], [1439, "|"], [1456, "sect"], [1476, "|"], [1492.500, "meas"],
  [1515, "caliper"], [1536.500, "weight"], [1557, "|"], [1573.500, "camera"], [1594, "|"], [1610.500, "ruler"], [1630, "|"],
  [1647, "swirl"], [1669, "handg"], [1691, "axis"], [1712, "tens"], [1734.500, "cycube", 1744], [1758, "link"],
  [1779, "stack", 1789], [1803, "body"], [1823, "combo"], [1951, "|"], [1967.500, "an1"], [1990, "an2"], [2011.500, "an3"],
  [2034, "an4"], [2053.500, "|"], [2070.500, "cup"], [2090, "|"], [2107.500, "cat1", 2117], [2131, "cat2", 2140],
];
const SIDE_TOOLS = [
  [676, "-"], [691, "gear"], [713, "-"], [732, "cursor", 740], [749, "-"], [767, "sketch", 777], [786, "-"],
  [803, "fillet", 813], [827, "chamfer"], [849, "draft", 858], [872, "shell"], [894, "thick"], [916, "target"],
  [939, "remove", 948], [958, "-"], [975, "thread", 985], [994, "-"], [1011, "transl", 1021], [1026, "="],
  [1041, "mirror"], [1064, "grid", 1073], [1078, "="], [1093, "scale", 1103], [1112, "-"], [1130, "gdim"], [1152, "dim"],
  [1169, "-"], [1186, "y1"], [1208, "y2"], [1230, "y3"], [1252, "y4"],
];
const startOf = (t) => ("|-=".includes(t[1]) ? t[0] - 1 : t[0] - 8);

const HTools = ({ list, end }) =>
  list.map((t, i) => {
    const x = startOf(t);
    const next = i + 1 < list.length ? startOf(list[i + 1]) : end;
    return (
      <Slot key={i} $w={next - x}>
        {t[1] === "|" ? <SepV /> : t[1] === "combo" ? (
          <Combo>
            <Fit w={38}>PartBody</Fit>
            <svg width="7" height="4" viewBox="0 0 7 4"><path d="M.5 .5L3.500 3.500 6.500 .5" fill="none" stroke="#555" /></svg>
          </Combo>
        ) : <Ico name={t[1]} />}
        {t[2] && <Caret $x={t[2] - x - 3} $y={16} />}
      </Slot>
    );
  });

const TREE = [
  { t: "272613", l: 0, w: 37, icon: "root" },
  { t: "xy plane", l: 1, w: 39, icon: "plane" },
  { t: "yz plane", l: 1, w: 39, icon: "plane" },
  { t: "zx plane", l: 1, w: 38, icon: "plane" },
  { t: "PartBody", l: 1, w: 44, icon: "partbody" },
  { t: "Rim Body", l: 2, w: 45, icon: "shaft" },
  { t: "Sketch.1", l: 3, w: 39, icon: "sketchT" },
  { t: "Center Lug", l: 2, w: 53, icon: "pad" },
  { t: "Sketch.2", l: 3, w: 40, icon: "sketchT" },
  { t: "Lug Hole", l: 2, w: 43, icon: "treehole" },
  { t: "Sketch.3", l: 3, w: 40, icon: "sketchT" },
  { t: "Lug Holes CircPattern.1", l: 2, w: 111, icon: "circ" },
  { t: "Spoke", l: 2, w: 29, icon: "pad" },
  { t: "Sketch.4", l: 3, w: 40, icon: "sketchT" },
  { t: "Spokes CircPattern.2", l: 2, w: 98, icon: "circ" },
  { t: "Axle Hole", l: 2, w: 44, icon: "treehole", u: true },
  { t: "Sketch.5", l: 3, w: 40, icon: "sketchT" },
];
const TreeBox = styled.div`
  position: relative;
  padding-top: 7px;
  width: 240px;
`;
const TreeRow = styled.div`
  position: relative;
  height: 20.830px;
  display: flex;
  align-items: center;
  gap: ${(p) => (p.$tight ? 0 : 2)}px;
  padding-left: ${(p) => p.$pl}px;
  font: 10px/14px "Noto Sans", sans-serif;
  color: #fff;
`;
const TreeIcon = styled.div` margin-top: -4px; `;
const TreeLabel = styled.div`
  background: rgba(44, 44, 92, 0.45);
  padding: 0 1px;
`;
const TreeLines = styled.svg`
  position: absolute;
  left: 0;
  top: 0;
  width: 120px;
  height: 380px;
`;
const Wheel = styled.svg`
  position: absolute;
  left: 448px;
  top: 68px;
  width: 560px;
  height: 560px;
`;
const Compass = styled.svg`
  position: absolute;
  left: 1350px;
  top: 14px;
  width: 80px;
  height: 90px;
`;
const Tripod = styled.svg`
  position: absolute;
  left: 1420px;
  top: 654px;
  width: 44px;
  height: 40px;
`;
const SnipGhost = styled.div`
  position: absolute;
  left: 888px;
  top: 364px;
  width: 280px;
  height: 38px;
  padding-left: 28px;
  background: linear-gradient(90deg, transparent, rgba(84, 84, 126, 0.18) 90px);
  color: rgba(45, 45, 88, 0.26);
  font-size: 23px;
  line-height: 38px;
`;

const Dot = ({ x, y, plus }) => (
  <g>
    <circle cx={x} cy={y} r="4.500" fill={plus ? "#77777c" : "#9a9a9a"} />
    <path d={`M${x - 3} ${y}H${x + 3}${plus ? `M${x} ${y - 3.500}V${y + 3.500}` : ""}`} stroke="#000" strokeWidth="2" />
  </g>
);

function Tree() {
  const yc = (i) => 15 + i * 20.830;
  return (
    <TreeBox>
      <TreeLines viewBox="0 0 120 380">
        <g stroke="#fff" strokeWidth="1.200" fill="none">
          <path d={`M5.500 20V${yc(4)}M20.500 ${yc(4)}V${yc(15)}`} />
          {[1, 2, 3].map((i) => <path key={i} d={`M5.500 ${yc(i)}H14`} />)}
          <path d={`M5.500 ${yc(4)}H15`} />
          {[5, 7, 9, 11, 12, 14, 15].map((i) => <path key={i} d={`M20.500 ${yc(i)}H29`} />)}
          {[6, 8, 10, 13, 16].map((i) => <path key={i} d={`M35.500 ${yc(i - 1) + 5}V${yc(i)}H44`} />)}
        </g>
        <circle cx="5.500" cy="16" r="3.500" fill="none" stroke="#ffe98a" strokeWidth="2.500" strokeDasharray="2 1" />
        <Dot x={5.500} y={yc(4)} />
        {[5, 7, 9, 12, 15].map((i) => <Dot key={i} x={20.500} y={yc(i)} />)}
        {[6, 8, 10, 13, 16].map((i) => <Dot key={i} x={35.500} y={yc(i)} plus />)}
      </TreeLines>
      {TREE.map((r) => (
        <TreeRow key={r.t} $tight={r.l === 3} $pl={r.l === 0 ? 3 : r.l * 15 + 1}>
          <TreeIcon><Ico name={r.icon} s={r.l === 3 ? 17 : 14} /></TreeIcon>
          <TreeLabel><Fit w={r.w} u={r.u}>{r.t}</Fit></TreeLabel>
        </TreeRow>
      ))}
    </TreeBox>
  );
}

/* a circle of radius r on the wheel axis, t units behind the front plane */
const ctr = (t) => [602 + 0.866 * t, 906 - 0.5 * t];
const Ring = ({ t, r, ...p }) => {
  const [x, y] = ctr(t);
  const dx = r / 2, dy = r * 0.866;
  const arc = `A${r} ${r * 0.577} 60 0 1`;
  return <path d={`M${x - dx} ${y - dy}${arc} ${x + dx} ${y + dy}${arc} ${x - dx} ${y - dy}Z`} {...p} />;
};
const hull = (t1, r1, t2, r2) => {
  const [a, b] = ctr(t1), [c, d] = ctr(t2);
  return `M${a - r1 / 2} ${b - r1 * 0.866}L${c - r2 / 2} ${d - r2 * 0.866}L${c + r2 / 2} ${d + r2 * 0.866}L${a + r1 / 2} ${b + r1 * 0.866}Z`;
};
const Grad = ({ id, p, stops }) => (
  <linearGradient id={id} gradientUnits="userSpaceOnUse" x1={p[0]} y1={p[1]} x2={p[2]} y2={p[3]}>
    {stops.map(([o, c]) => <stop key={o} offset={o} stopColor={c} />)}
  </linearGradient>
);
const FACE = "#9e9ec1", DARK = "#6a6a80", LIGHT = "#c3c3ea";
const Body = ({ t1, t2, r1, fill }) => (
  <g stroke="none" fill={fill}>
    <path d={hull(t1, r1, t2, r1)} />
    <Ring t={t2} r={r1} />
  </g>
);

function WheelDrawing() {
  return (
    <Wheel viewBox="0 0 1568 1568" stroke="#000" strokeWidth="3.600" strokeLinejoin="round">
      <defs>
        <Grad id="back" p={[860, 100, 1430, 900]} stops={[[0, LIGHT], [0.2, LIGHT], [0.6, "#8888a8"], [0.8, DARK], [1, DARK]]} />
        <Grad id="barrel" p={[800, 180, 1220, 800]} stops={[[0, "#ceceff"], [0.25, "#c4c4f2"], [0.55, "#a0a0c4"], [0.85, DARK], [1, DARK]]} />
        <Grad id="barrel1" p={[740, 250, 1110, 850]} stops={[[0, "#ccccfc"], [0.3, "#c6c6f4"], [0.5, "#a0a0c6"], [0.85, DARK], [1, DARK]]} />
        <Grad id="barrel2" p={[680, 290, 1080, 900]} stops={[[0, "#ccccfa"], [0.2, "#b6b6de"], [0.5, "#9090b0"], [0.85, DARK], [1, DARK]]} />
        <Grad id="drum" p={[450, 300, 1060, 1120]} stops={[[0, LIGHT], [0.2, "#bcbce4"], [0.5, "#9090b2"], [0.75, DARK], [1, DARK]]} />
        <Grad id="recess" p={[190, 640, 640, 1400]} stops={[[0, DARK], [0.35, DARK], [0.65, "#a4a4ca"], [1, LIGHT]]} />
        <Grad id="hub" p={[560, 680, 790, 960]} stops={[[0, LIGHT], [0.4, "#a6a6cc"], [0.85, "#747490"], [1, DARK]]} />
        <Grad id="inner" p={[380, 740, 440, 920]} stops={[[0, DARK], [0.5, "#6e6e88"], [1, "#8888a8"]]} />
        <Grad id="well" p={[600, 1100, 720, 1300]} stops={[[0, "#a6a6cc"], [0.5, "#bcbce4"], [1, LIGHT]]} />
        <linearGradient id="bore" x1="0.1" y1="0.100" x2="0.700" y2="0.900">
          <stop offset="0" stopColor="#62627a" />
          <stop offset="0.350" stopColor="#7c7c9c" />
          <stop offset="1" stopColor="#cfcff8" />
        </linearGradient>
        <clipPath id="lip"><Ring t={0} r={610} /></clipPath>
      </defs>

      {/* rear flange */}
      <Ring t={458} r={631} fill="url(#back)" />
      <path d={hull(413, 631, 458, 631)} fill="url(#back)" stroke="none" />
      <Ring t={413} r={632} fill={FACE} />
      {/* barrel */}
      <Ring t={415} r={573} fill="url(#barrel)" />
      <Ring t={325} r={538} fill="url(#barrel1)" />
      <Body t1={100} r1={526} t2={257} fill="url(#barrel2)" />
      <Ring t={257} r={526} fill="none" />
      <path d="M962 183L998 163M960 232L880 303 828 347 740 397" fill="none" />
      {/* front flange */}
      <Ring t={100} r={600} fill="url(#drum)" />
      <Body t1={0} r1={630} t2={62} fill="url(#drum)" />
      <Ring t={62} r={630} fill="none" />
      <path d="M605 390L655 363M687 381L706 372" fill="none" />
      <Ring t={0} r={630} fill={FACE} />
      <Ring t={0} r={624} fill="none" strokeWidth="2" stroke="#c8c8ee" />
      <Ring t={0} r={610} fill="url(#recess)" />

      <g clipPath="url(#lip)">
        <Ring t={46} r={610} fill={FACE} />
        <path d="M605 1405L640 1385" fill="none" />

        {/* upper left opening */}
        <path d="M328 424Q350 402 380 390Q440 370 505 377L583 678 512 694Z" fill={FACE} />
        <path d="M408 437Q450 402 508 395L583 674 562 665Z" fill={DARK} />
        <path d="M328 424L380 393 562 665 512 694Z" fill="#9292b5" />
        <path d="M508 398Q468 460 470 527M522 450Q513 530 520 608" fill="none" />

        {/* upper right opening */}
        <path d="M797 575L760 676Q820 715 855 800L937 778Q880 665 797 575Z" fill="#40406f" />
        <path d="M770 545L797 575 743 714 695 740Z" fill={DARK} />

        {/* lower right opening */}
        <path d="M803 985L1035 1127 1030 1200Q1020 1240 1000 1277L968 1328 778 1068Z" fill="#9a9abe" stroke="none" />
        <path d="M822 1038L1000 1277Q1025 1240 1030 1178Q900 1140 822 1038Z" fill={LIGHT} />
        <path d="M855 1020L1036 1127 1031 1178Q910 1140 830 1035Z" fill="#454576" />
        <path d="M803 985L1040 1130M778 1068L968 1328 1000 1277M918 1166L968 1152M942 1198Q975 1213 1014 1217M970 1241H998M985 1257L1026 1190M1030 1178Q1030 1230 1000 1277" fill="none" />

        {/* bottom opening */}
        <path d="M585 1083L532 1262Q630 1355 748 1388L690 1115Z" fill="url(#well)" />
        <path d="M592 1198Q650 1262 730 1290L738 1337Q650 1310 580 1237Z" fill={FACE} />
        <path d="M570 1243Q650 1325 741 1350M690 1270L720 1255M640 1342L680 1320" fill="none" />
        <path d="M585 1083L532 1262 580 1237 617 1100Z" fill={DARK} />

        {/* left opening */}
        <path d="M245 673L313 950 460 920 443 777Z" fill={DARK} />
        <path d="M297 698Q305 820 357 922L390 915Q345 830 338 724Z" fill={FACE} />
        <path d="M338 724Q345 830 390 915L460 905 443 777Z" fill="url(#inner)" />
        <path d="M285 693Q292 820 350 930" fill="none" />
        <path d="M313 950L357 922 458 905 460 920Z" fill={LIGHT} />
      </g>

      {/* hub */}
      <path d="M760 676Q820 715 855 802L768 846 695 740 743 714Z" fill="url(#hub)" />
      <path d="M512 694L583 660 583 678Q640 690 695 740L743 714 800 770 768 846Q805 920 803 985L742 1088 600 900Z" fill="url(#hub)" stroke="none" />
      <path d="M583 678Q640 690 695 740L743 714M767 845Q803 915 803 985" fill="none" />
      <path d="M767 845L805 822 935 778 941 788Z" fill={LIGHT} />
      <path d="M742 1088L765 998 803 985 855 1020Z" fill={DARK} />
      <Ring t={1} r={227} fill={FACE} />
      {[[497, 805], [603, 778], [709, 928], [537, 972], [668, 1048]].map(([x, y]) => (
        <ellipse key={x} rx="54" ry="31" transform={`translate(${x} ${y}) rotate(60)`} fill="url(#bore)" />
      ))}
      <path d="M487 838L525 817M570 752L600 736M638 1052L690 1028" fill="none" />
      <ellipse rx="70" ry="41" transform="translate(603 907) rotate(60)" fill="url(#bore)" />
      <path d="M556 870L606 850M606 850Q610 890 650 925" fill="none" />
      <path d="M572 852V960M634 852V960M540 906L634 852M540 906L634 960M572 852L664 906 572 960" fill="none" stroke="#eee" strokeWidth="3" />
    </Wheel>
  );
}

function CatiaLogo({ s }) {
  return (
    <Glyph $s={s} viewBox="0 0 16 16">
      <rect width="16" height="16" fill="#0a0a18" />
      <path d="M2 1L8 0 16 5V9Z" fill="#2a5a9a" />
      <path d="M3 2L8 4 14 11 12 14 7 9Z" fill="#ff9a30" />
      <path d="M6 2L10 4 15 10 13 10Z" fill="#c8e8ff" />
    </Glyph>
  );
}

const MENU = [
  ["Start", 39, 20, 7], ["File", 38, 15, 5], ["Edit", 34, 16, 0], ["View", 39, 20, 0],
  ["Insert", 41, 23, 0], ["Tools", 42, 22, 0], ["Window", 53, 35, 0], ["Help", 30, 20, 0],
];
const LogoSlot = styled.div`
  height: 29px;
  padding-left: 3px;
  margin-top: -7px;
`;

function CatiaWindow() {
  return (
    <Catia>
      <CTitle>
        <CatiaLogo s={11} />
        <CTitleText><Fit w={117}>CATIA V5 - [272613.CATPart]</Fit></CTitleText>
        <CWinBtns>
          <Glyph $s={9} viewBox="0 0 9 9"><path d="M.5 4.500H8.500" stroke="#333" /></Glyph>
          <Glyph $s={9} viewBox="0 0 9 9" fill="none" stroke="#333"><path d="M.5 2.500H6.500V8.500H.5ZM2.500 2.500V.5H8.500V6.500H6.500" /></Glyph>
          <Glyph $s={9} viewBox="0 0 9 9" stroke="#333"><path d="M.5 .5L8.500 8.500M8.500 .5L.5 8.500" /></Glyph>
        </CWinBtns>
      </CTitle>
      <CMenu>
        <CatiaLogo s={15} />
        {MENU.map(([t, w, tw, pl], i) => (
          <MenuItem key={t} $w={w} $pl={pl} $on={i === 0}>
            <Fit w={tw}><u>{t[0]}</u>{t.slice(1)}</Fit>
          </MenuItem>
        ))}
        <MdiBtns>
          <MdiBtn><svg width="7" height="7" viewBox="0 0 7 7"><path d="M1 6H6" stroke="#567" strokeWidth="1.500" /></svg></MdiBtn>
          <MdiBtn><svg width="7" height="7" viewBox="0 0 7 7"><path d="M.5 3.500H4.500V6.500H.5ZM2.500 3V.7H6.500V4.500H5" fill="none" stroke="#567" /></svg></MdiBtn>
          <MdiBtn><svg width="7" height="7" viewBox="0 0 7 7"><path d="M1 1L6 6M6 1L1 6" stroke="#567" strokeWidth="1.500" /></svg></MdiBtn>
        </MdiBtns>
      </CMenu>
      <TopBar><HTools list={TOP_TOOLS} end={2130} /></TopBar>
      <Middle>
        <Viewport>
          <Tree />
          <WheelDrawing />
          <SnipGhost><Fit w={143}><u>W</u>indow Snip</Fit></SnipGhost>
          <Compass viewBox="0 0 80 90" fill="#1f4560" stroke="#d8c8f8" strokeWidth="1.500">
            <path d="M36.500 16Q12 30 11.500 57L36.500 44 62 57Q60 30 36.500 16Z" />
            <path d="M10 67L36.500 52 63.500 67Q62 82 36.500 82T10 67Z" />
            <path d="M36.500 6V66" />
            <circle cx="36.500" cy="7" r="2" fill="#d8c8f8" />
            <rect x="33" y="64" width="7" height="7" fill="#d00000" stroke="none" />
            <g fill="#c8c020" stroke="none" fontFamily="Liberation Mono, monospace" fontSize="9">
              <text x="36" y="14">z</text><text x="12" y="64">x</text><text x="60" y="64">y</text>
            </g>
          </Compass>
          <Tripod viewBox="0 0 44 40" stroke="#e8e8f0" fill="none">
            <path d="M21.500 10V26L10 31M21.500 26L33 31" />
            <g fill="#e8e8f0" stroke="none" fontFamily="Liberation Sans, sans-serif" fontSize="8">
              <text x="21" y="11">z</text><text x="7" y="34">x</text><text x="34" y="33">y</text>
            </g>
          </Tripod>
        </Viewport>
        <SideBar>
          <SideSlot $h={3} />
          {SIDE_TOOLS.map((t, i) => {
            const y = startOf(t);
            const next = i + 1 < SIDE_TOOLS.length ? startOf(SIDE_TOOLS[i + 1]) : 1374;
            return (
              <SideSlot key={i} $h={next - y}>
                {t[1] === "-" || t[1] === "=" ? <SepH $wide={t[1] === "="} /> : <Ico name={t[1]} />}
                {t[2] && <Caret $x={23} $y={t[2] - y - 1} />}
              </SideSlot>
            );
          })}
        </SideBar>
      </Middle>
      <BottomBar>
        <HTools list={BOTTOM_TOOLS} end={2210} />
        <LogoSlot>
          <svg width="32" height="27" viewBox="0 0 32 27">
            <path d="M8 2H14L9 7Q14 8 9 11" fill="none" stroke="#e03030" strokeWidth="1.500" />
            <text x="0" y="18" fontFamily="Liberation Sans, sans-serif" fontStyle="italic" fontSize="13" fill="#4a3a90">D</text>
            <text x="9" y="17" fontFamily="Liberation Sans, sans-serif" fontStyle="italic" fontSize="13" fill="#f09020">S</text>
            <text x="6" y="24" textLength="25" lengthAdjust="spacingAndGlyphs" fontFamily="Liberation Sans, sans-serif" fontStyle="italic" fontWeight="700" fontSize="7.500" fill="#3a3a90">CATIA</text>
          </svg>
        </LogoSlot>
      </BottomBar>
      <StatusBar>
        <StatusText><Fit w={128}>Select an object or a command</Fit></StatusText>
        <StatusInput />
        <StatusBtn><svg width="12" height="10" viewBox="0 0 12 10"><path d="M1 1H7V6H1ZM8 9H11V3" fill="none" stroke="#8a8a92" /></svg></StatusBtn>
        <StatusBtn><svg width="12" height="10" viewBox="0 0 12 10"><path d="M1 5A4 4 0 1 0 9 5 4 4 0 1 0 1 5ZM5 3V7M8 9H11V1" fill="none" stroke="#8a8a92" /></svg></StatusBtn>
      </StatusBar>
    </Catia>
  );
}

/* label, label width, distance to the next entry */
const NAV = [["INFORMATION", 193, 233], ["ASSIGNMENTS", 195, 234], ["QUIZZES", 112, 151], ["FINAL PROJECT", 205, 286]];

/* word, width, space before it */
const TITLE = [
  ["CGT", 151, 0], ["163:", 129, 15], ["Graphical", 359, 14], ["Communication", 596, 16],
  ["and", 146, 15], ["Spatial", 252, 16], ["Analysis", 300, 16],
];

export default function App() {
  return (
    <Page>
      <GlobalStyle />
      <Chrome />
      <Site>
        <SiteNav>
          {NAV.map(([t, w, step]) => <NavLink key={t} $w={step}><Fit w={w}>{t}</Fit></NavLink>)}
          <CoverButton><Fit w={175}>COVER PAGE</Fit></CoverButton>
        </SiteNav>
        <Title>{TITLE.map(([t, w, ml]) => <Fit key={t} w={w} ml={ml}>{t}</Fit>)}</Title>
        <Subtitle><Fit w={565}>Siddharth Nathella</Fit></Subtitle>
        <CatiaWindow />
      </Site>
    </Page>
  );
}
